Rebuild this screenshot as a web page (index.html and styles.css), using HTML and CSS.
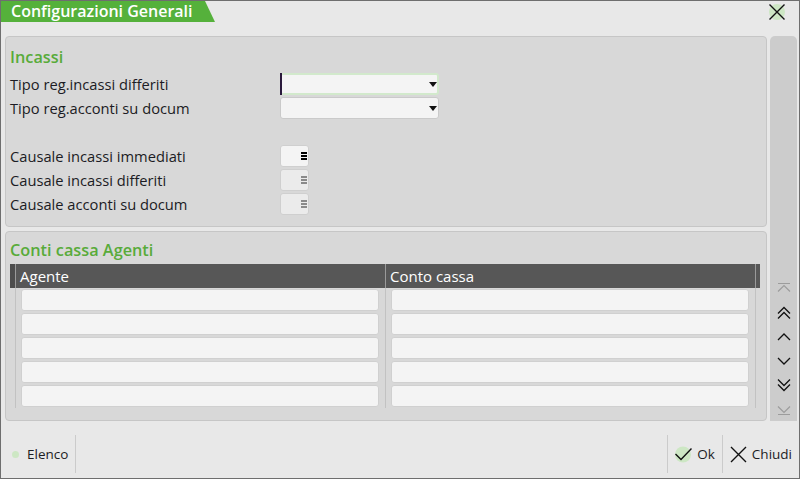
FILE: index.html
```html
<!DOCTYPE html>
<html lang="it">
<head>
<meta charset="utf-8">
<title>Configurazioni Generali</title>
<link rel="stylesheet" href="styles.css">
</head>
<body>
<div class="window">
  <div class="titlebar">
    <div class="tab">Configurazioni Generali</div>
    <div class="close">
      <svg width="24" height="22" viewBox="0 0 24 22"><circle cx="12" cy="11" r="8" fill="#cde7c4"/><path d="M4.5 3.5 L19.5 18.5 M19.5 3.5 L4.5 18.5" stroke="#111" stroke-width="1.4" fill="none"/></svg>
    </div>
  </div>
  <div class="main">
    <div class="panels">
      <section class="panel panel-incassi">
        <h2 class="panel-title">Incassi</h2>
        <div class="form">
          <div class="row"><span class="label">Tipo reg.incassi differiti</span><div class="select focused"><span class="caret"></span><span class="arrow"></span></div></div>
          <div class="row"><span class="label">Tipo reg.acconti su docum</span><div class="select"><span class="arrow"></span></div></div>
          <div class="row"></div>
          <div class="row"><span class="label">Causale incassi immediati</span><div class="lookup active"><span class="menu-icon"></span></div></div>
          <div class="row"><span class="label">Causale incassi differiti</span><div class="lookup"><span class="menu-icon"></span></div></div>
          <div class="row"><span class="label">Causale acconti su docum</span><div class="lookup"><span class="menu-icon"></span></div></div>
        </div>
      </section>
      <section class="panel panel-agenti">
        <h2 class="panel-title">Conti cassa Agenti</h2>
        <div class="grid">
          <div class="grid-head">
            <div class="strip"></div>
            <div class="hcol">Agente</div>
            <div class="hcol">Conto cassa</div>
            <div class="strip end"></div>
          </div>
          <div class="grid-body">
            <div class="gap"></div><div class="col"><div class="cell"></div></div><div class="col"><div class="cell"></div></div><div class="gap end"></div>
            <div class="gap"></div><div class="col"><div class="cell"></div></div><div class="col"><div class="cell"></div></div><div class="gap end"></div>
            <div class="gap"></div><div class="col"><div class="cell"></div></div><div class="col"><div class="cell"></div></div><div class="gap end"></div>
            <div class="gap"></div><div class="col"><div class="cell"></div></div><div class="col"><div class="cell"></div></div><div class="gap end"></div>
            <div class="gap"></div><div class="col"><div class="cell"></div></div><div class="col"><div class="cell"></div></div><div class="gap end"></div>
          </div>
        </div>
      </section>
    </div>
    <div class="scrollbar">
      <div class="sicon dim"><svg width="14" height="14" viewBox="0 0 14 14"><path d="M1 1.5 H13 M1 9.5 L7 3.5 L13 9.5" stroke="currentColor" stroke-width="1.2" fill="none"/></svg></div>
      <div class="sicon"><svg width="14" height="14" viewBox="0 0 14 14"><path d="M1 7.5 L7 1.5 L13 7.5 M1 12.5 L7 6.5 L13 12.5" stroke="currentColor" stroke-width="1.3" fill="none"/></svg></div>
      <div class="sicon"><svg width="14" height="14" viewBox="0 0 14 14"><path d="M1 10 L7 4 L13 10" stroke="currentColor" stroke-width="1.3" fill="none"/></svg></div>
      <div class="sicon"><svg width="14" height="14" viewBox="0 0 14 14"><path d="M1 4 L7 10 L13 4" stroke="currentColor" stroke-width="1.3" fill="none"/></svg></div>
      <div class="sicon"><svg width="14" height="14" viewBox="0 0 14 14"><path d="M1 1.5 L7 7.5 L13 1.5 M1 6.5 L7 12.5 L13 6.5" stroke="currentColor" stroke-width="1.3" fill="none"/></svg></div>
      <div class="sicon dim"><svg width="14" height="14" viewBox="0 0 14 14"><path d="M1 4.5 L7 10.5 L13 4.5 M1 12.5 H13" stroke="currentColor" stroke-width="1.2" fill="none"/></svg></div>
    </div>
  </div>
  <div class="footer">
    <div class="fbtn first"><span class="dot"></span><span>Elenco</span></div>
    <div class="fright">
      <div class="fbtn sep"><svg width="17" height="17" viewBox="0 0 17 17"><circle cx="8" cy="8.5" r="8" fill="#cde7c4"/><path d="M0.5 8 L6 13.5 L16.5 2.5" stroke="#111" stroke-width="1.4" fill="none"/></svg><span>Ok</span></div>
      <div class="fbtn sep"><svg width="17" height="17" viewBox="0 0 17 17"><path d="M1 1 L16 16 M16 1 L1 16" stroke="#111" stroke-width="1.4" fill="none"/></svg><span>Chiudi</span></div>
    </div>
  </div>
</div>
</body>
</html>
```
FILE: styles.css
```css
html, body {
  margin: 0;
  padding: 0;
}
body {
  width: 800px;
  height: 479px;
  overflow: hidden;
  font-family: "Open Sans", "Noto Sans", sans-serif;
  color: #1c1c24;
}
.window {
  box-sizing: border-box;
  width: 800px;
  height: 479px;
  border: 1px solid #6e6e6e;
  background: #e8e8e8;
  display: flex;
  flex-direction: column;
}
.titlebar {
  height: 21px;
  display: flex;
  justify-content: space-between;
  align-items: flex-start;
}
.tab {
  width: 214px;
  box-sizing: border-box;
  height: 21px;
  background: #55b13b;
  color: #fff;
  font-weight: 600;
  font-size: 16px;
  line-height: 21px;
  padding-left: 10px;
  white-space: nowrap;
  clip-path: polygon(0 0, 204px 0, 214px 100%, 0 100%);
}
.close {
  margin-right: 10px;
  height: 22px;
}
.close svg { display: block; }
.main {
  display: flex;
  gap: 3px;
  padding: 14px 2px 0 4px;
}
.panels {
  flex: 1;
  display: flex;
  flex-direction: column;
  gap: 4px;
}
.panel {
  box-sizing: border-box;
  background: #d8d8d8;
  border: 1px solid #c6c6c6;
  border-radius: 4px;
  padding: 0 4px;
}
.panel-incassi { height: 191px; padding-top: 10px; }
.panel-agenti { height: 190px; padding-top: 8px; }
.panel-title {
  margin: 0;
  font-size: 16.3px;
  font-weight: 600;
  line-height: 20px;
  color: #58ab3a;
}
.form {
  margin-top: 5px;
}
.row {
  height: 24px;
  display: flex;
  align-items: center;
}
.label {
  width: 270px;
  font-size: 14.7px;
  white-space: nowrap;
}
.select {
  position: relative;
  box-sizing: border-box;
  width: 159px;
  height: 22px;
  background: #f4f4f4;
  border: 1px solid #cacaca;
  border-radius: 3px;
}
.select.focused {
  border: 2px solid #d2e9cc;
  border-left: none;
}
.caret {
  position: absolute;
  left: 0;
  top: -2px;
  width: 2px;
  height: 22px;
  background: #2a1a3c;
}
.arrow {
  position: absolute;
  right: 1px;
  top: 8px;
  width: 0;
  height: 0;
  border-top: 5px solid #111;
  border-left: 4px solid transparent;
  border-right: 4px solid transparent;
}
.select.focused .arrow { top: 7px; right: 0; }
.lookup {
  box-sizing: border-box;
  width: 29px;
  height: 22px;
  background: #ebebeb;
  border: 1px solid #cfcfcf;
  border-radius: 3px;
  display: flex;
  align-items: center;
  justify-content: flex-end;
  padding-right: 1px;
  color: #8a8a8a;
}
.lookup.active {
  background: #f4f4f4;
  color: #000;
}
.menu-icon {
  width: 6px;
  height: 8px;
  background: repeating-linear-gradient(to bottom, currentColor 0 2px, transparent 2px 3px);
}
.grid {
  width: 750px;
  margin-top: 4px;
}
.grid-head {
  display: flex;
  height: 24px;
  background: #575757;
  color: #fff;
  font-size: 15px;
  line-height: 24px;
}
.strip { width: 5px; background: #4d4d4d; }
.strip.end { background: #575757; border-left: 1px solid #9a9a9a; width: 4px; }
.hcol {
  box-sizing: border-box;
  width: 370px;
  border-left: 1px solid #9a9a9a;
  padding-left: 4px;
  white-space: nowrap;
}
.grid-body {
  margin-top: 0;
  display: grid;
  grid-template-columns: 5px 370px 370px 5px;
}
.col {
  box-sizing: border-box;
  border-left: 1px solid #c2c2c2;
  padding: 1px 6px 1px 5px;
}
.gap.end { border-left: 1px solid #c2c2c2; }
.cell {
  box-sizing: border-box;
  height: 22px;
  background: #f4f4f4;
  border: 1px solid #d0d0d0;
  border-radius: 3px;
}
.scrollbar {
  box-sizing: border-box;
  width: 27px;
  height: 385px;
  background: #cccccc;
  border-radius: 5px 5px 0 0;
  display: flex;
  flex-direction: column;
  justify-content: flex-end;
  align-items: center;
  padding-left: 1px;
}
.sicon {
  height: 24px;
  display: flex;
  align-items: center;
  justify-content: center;
  color: #111;
}
.sicon svg { display: block; }
.sicon.dim { color: #9c9c9c; }
.footer {
  flex: 1;
  display: flex;
  padding-top: 14px;
  font-size: 13.5px;
}
.fbtn {
  height: 38px;
  display: flex;
  align-items: center;
  box-sizing: border-box;
}
.fbtn.first {
  padding: 0 7px 0 11px;
  gap: 8px;
  border-right: 1px solid #cbcbcb;
}
.dot {
  width: 7px;
  height: 7px;
  border-radius: 50%;
  background: #cde7c4;
}
.fright {
  margin-left: auto;
  display: flex;
}
.fbtn.sep {
  border-left: 1px solid #cbcbcb;
  padding: 0 7px;
  gap: 5px;
}
.fbtn svg { display: block; }
```
